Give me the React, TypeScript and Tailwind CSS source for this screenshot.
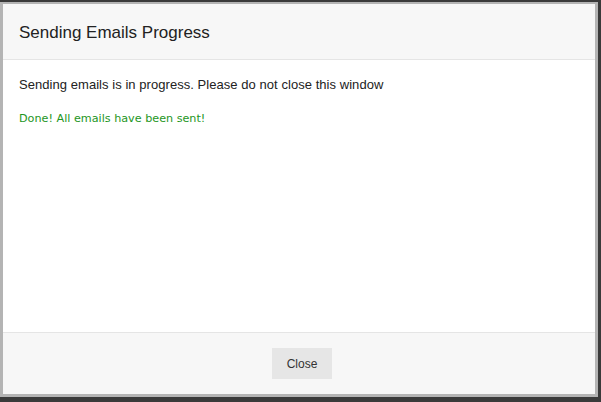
import React from "react";

export default function App() {
  return (
    <div className="w-[601px] h-[402px] bg-[#3a3a3a] overflow-hidden pt-[2px]">
      <div className="w-[598px] h-[395px] bg-[#b4b4b4] p-[3px] pt-[2px]">
        <div
          className="w-[592px] h-[390px] bg-white flex flex-col"
          style={{ fontFamily: '"Liberation Sans", Arial, sans-serif' }}
        >
          <div className="h-[56px] bg-[#f7f7f7] border-b border-[#e5e5e5] flex items-center px-[16px] pt-[2px]">
            <h4 className="text-[17px] text-[#222] leading-none">Sending Emails Progress</h4>
          </div>
          <div className="flex-1 px-[16px] pt-[16px]">
            <p className="text-[13px] text-[#222] leading-[18px] tracking-[0.05px]">
              Sending emails is in progress. Please do not close this window
            </p>
            <p
              className="mt-[18px] text-[11.2px] text-[#1e961e] leading-[14px]"
              style={{ fontFamily: '"DejaVu Sans", Verdana, sans-serif' }}
            >
              Done! All emails have been sent!
            </p>
          </div>
          <div className="h-[62px] bg-[#f7f7f7] border-t border-[#e5e5e5] flex items-center justify-center">
            <button className="w-[60px] h-[31px] ml-[6px] bg-[#e6e6e6] text-[12px] text-[#333]">
              Close
            </button>
          </div>
        </div>
      </div>
    </div>
  );
}
